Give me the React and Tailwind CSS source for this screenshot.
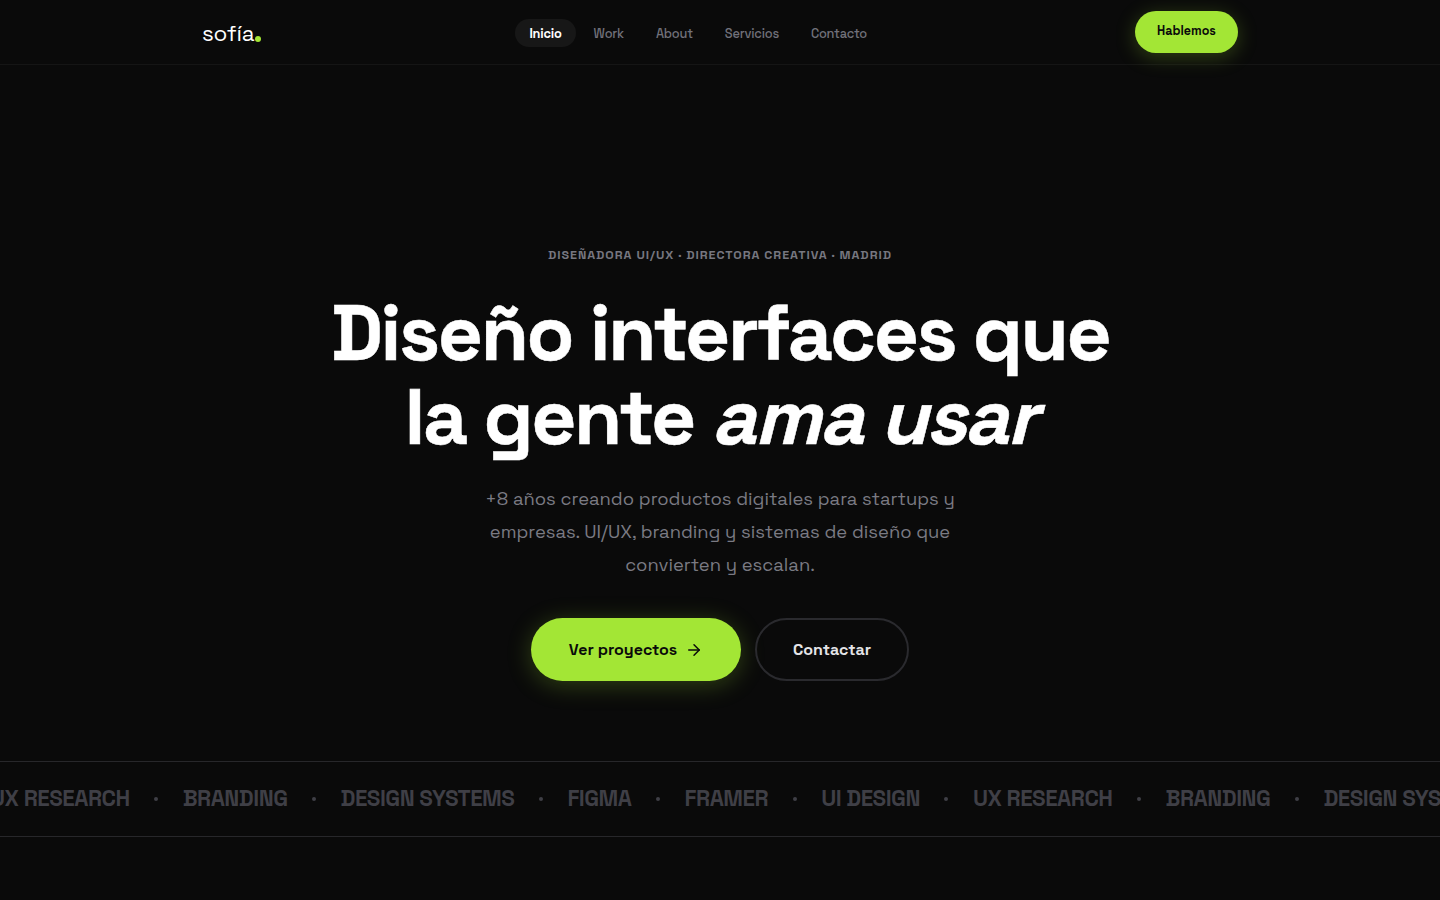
import React from "react";
import { ArrowRight } from "lucide-react";

const navLinks = ["Inicio", "Work", "About", "Servicios", "Contacto"];
const skills = ["UX RESEARCH", "BRANDING", "DESIGN SYSTEMS", "FIGMA", "FRAMER", "UI DESIGN"];

const App = () => {
  return (
    <div className="h-[900px] overflow-hidden bg-[#0a0a0a] font-['Space_Grotesk','Inter',sans-serif]">
      <header className="h-[65px] border-b border-[#151515]">
        <div className="mx-auto flex h-[64px] w-[1036px] items-center justify-between">
          <div className="mt-[5px] flex items-end text-[22.4px] leading-none tracking-[-0.2px] text-white">
            sofía
            <span className="mb-[4px] ml-[1px] size-[6px] rounded-full bg-[#a3e635]" />
          </div>
          <nav className="mt-[2px] flex items-center gap-[4px]">
            {navLinks.map((link, i) => (
              <a
                key={link}
                className={
                  i === 0
                    ? "rounded-full bg-[#171717] px-[14px] pt-[5px] pb-[3px] text-[12.8px] leading-5 font-semibold tracking-[-0.2px] text-white"
                    : "px-[14px] pt-[5px] pb-[3px] text-[12.8px] leading-5 font-medium tracking-[-0.2px] text-[#71717a]"
                }
              >
                {link}
              </a>
            ))}
          </nav>
          <button className="h-[42px] w-[103px] rounded-full bg-[#a3e635] pb-[2px] text-[12.5px] font-semibold text-[#0a0a0a] shadow-[0_4px_20px_rgba(163,230,53,0.25)]">
            Hablemos
          </button>
        </div>
      </header>

      <main className="flex h-[696px] flex-col items-center pt-[182px]">
        <p className="text-[12.48px] font-semibold leading-4 tracking-[0.97px] text-[#777780]">
          DISEÑADORA UI/UX · DIRECTORA CREATIVA · MADRID
        </p>
        <h1 className="mt-[28px] text-center text-[78.4px] font-bold leading-[84px] tracking-[-2.352px] text-white [-webkit-text-stroke:0.5px_white]">
          Diseño interfaces que
          <br />
          la gente <em className="italic">ama usar</em>
        </h1>
        <p className="mt-[23px] w-[520px] text-center text-[18.4px] leading-[33px] text-[#7a7a83]">
          +8 años creando productos digitales para startups y
          <br />
          empresas. UI/UX, branding y sistemas de diseño que
          <br />
          convierten y escalan.
        </p>
        <div className="mt-[37px] flex gap-[14px]">
          <button className="flex h-[63px] w-[210px] items-center justify-center gap-2 rounded-full bg-[#a3e635] text-[16px] font-semibold text-[#0a0a0a] shadow-[0_4px_24px_rgba(163,230,53,0.25)]">
            Ver proyectos
            <ArrowRight size={18} strokeWidth={2} />
          </button>
          <button className="h-[63px] w-[154px] rounded-full border-2 border-[#2a2a2e] text-[16px] font-semibold text-[#e4e4e7]">
            Contactar
          </button>
        </div>
      </main>

      <div className="flex h-[76px] items-center overflow-hidden border-y border-[#27272a]">
        <div className="-ml-[10px] flex items-center whitespace-nowrap text-[22.4px] font-bold tracking-[-0.5px] text-[#3f3f46]">
          {[...skills, ...skills].map((skill, i) => (
            <React.Fragment key={i}>
              <span>{skill}</span>
              <span className="mx-[24.5px] size-[4px] rounded-full bg-[#3f3f46]" />
            </React.Fragment>
          ))}
        </div>
      </div>
    </div>
  );
};

export default App;
